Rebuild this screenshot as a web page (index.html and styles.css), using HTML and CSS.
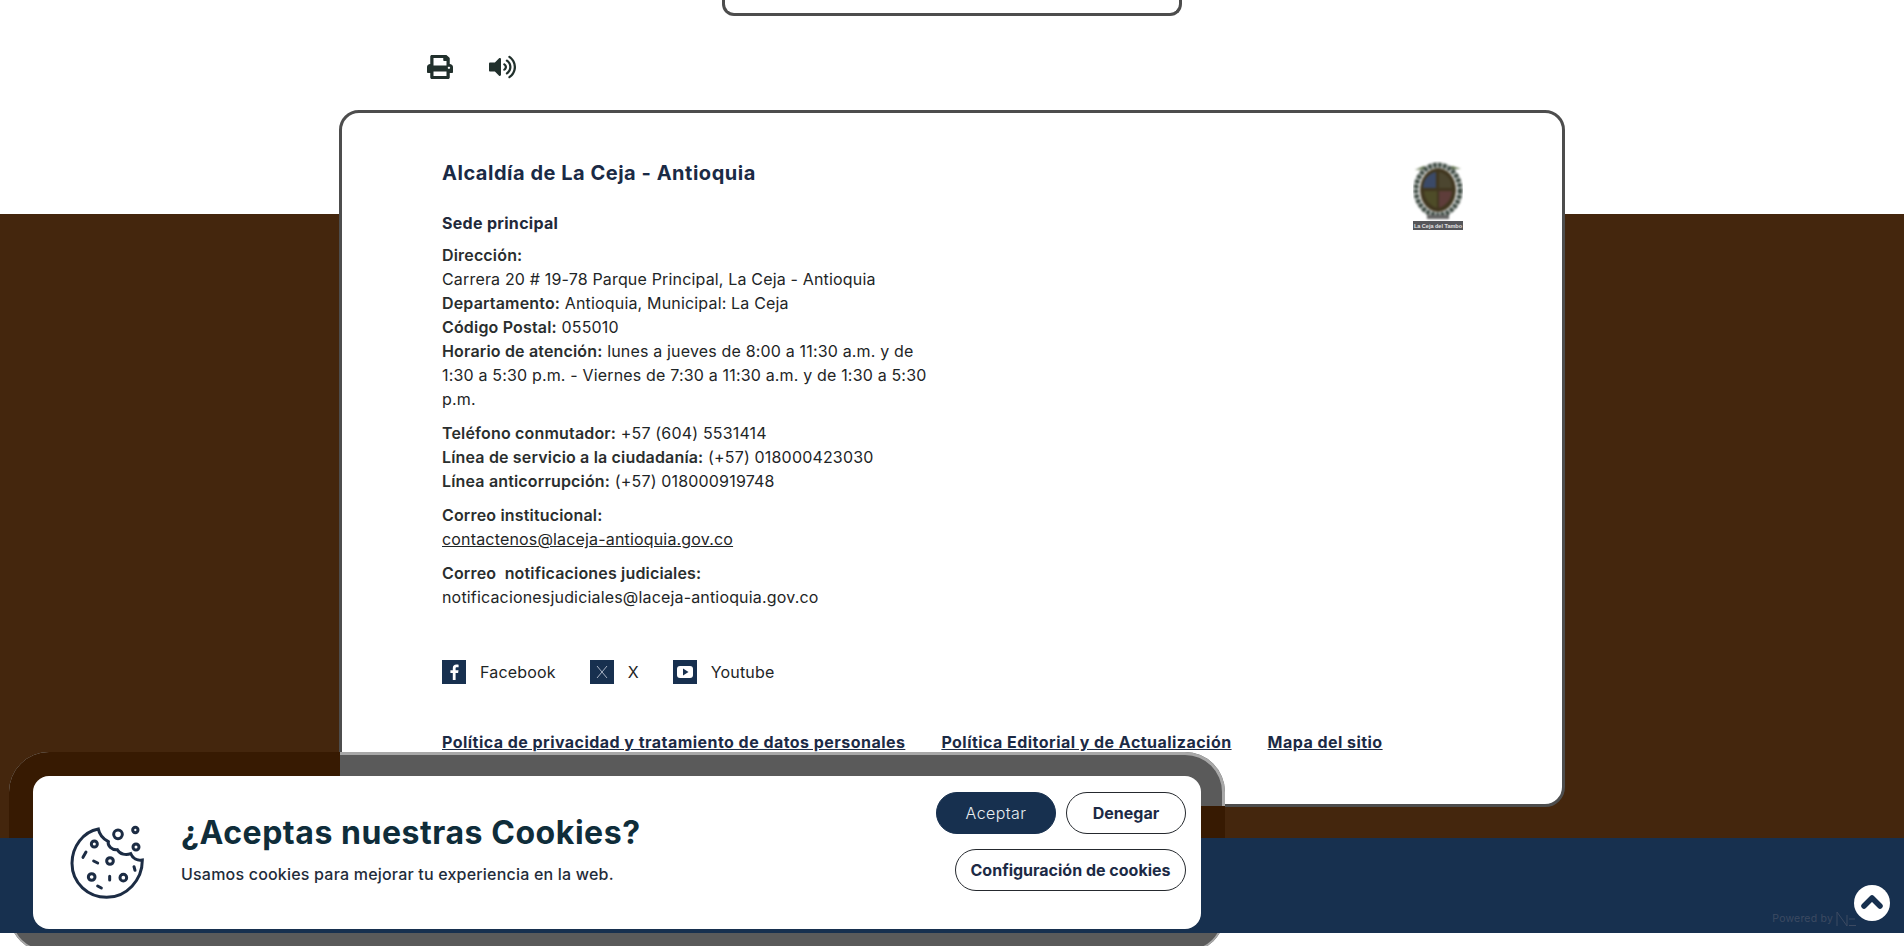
FILE: index.html
```html
<!DOCTYPE html>
<html lang="es">
<head>
<meta charset="utf-8">
<title>Alcaldía de La Ceja - Antioquia</title>
<link rel="stylesheet" href="styles.css">
</head>
<body>
<header class="top">
  <div class="stub"></div>
  <div class="tools">
    <svg class="ico-print" viewBox="0 0 512 512" preserveAspectRatio="none"><path d="M448 192V77.25c0-8.49-3.37-16.62-9.37-22.63L393.37 9.37c-6-6-14.14-9.37-22.63-9.37H96C78.33 0 64 14.33 64 32v160c-35.35 0-64 28.65-64 64v112c0 8.84 7.16 16 16 16h48v96c0 17.67 14.33 32 32 32h320c17.67 0 32-14.33 32-32v-96h48c8.84 0 16-7.16 16-16V256c0-35.35-28.65-64-64-64zm-64 256H128v-96h256v96zm0-224H128V64h192v48c0 8.84 7.16 16 16 16h48v96zm48 72c-13.25 0-24-10.75-24-24 0-13.26 10.75-24 24-24s24 10.74 24 24c0 13.25-10.75 24-24 24z"/></svg>
    <svg class="ico-sound" viewBox="0 0 576 512" preserveAspectRatio="none"><path d="M215.03 71.05L126.06 160H24c-13.26 0-24 10.74-24 24v144c0 13.25 10.74 24 24 24h102.06l88.97 88.95c15.03 15.03 40.97 4.47 40.97-16.97V88.02c0-21.46-25.96-31.98-40.97-16.97zm233.32-51.08c-11.17-7.33-26.18-4.24-33.51 6.95-7.34 11.17-4.22 26.18 6.95 33.51 66.27 43.49 105.82 116.6 105.82 195.58 0 78.98-39.55 152.09-105.82 195.58-11.17 7.32-14.29 22.34-6.95 33.5 7.04 10.71 21.93 14.56 33.51 6.95C528.27 439.58 576 351.33 576 256S528.27 72.43 448.35 19.97zM480 256c0-63.53-32.06-121.94-85.77-156.24-11.19-7.14-26.03-3.82-33.12 7.46s-3.78 26.21 7.41 33.36C408.27 165.97 432 209.11 432 256s-23.73 90.03-63.48 115.42c-11.19 7.14-14.5 22.07-7.41 33.36 6.51 10.36 21.12 15.14 33.12 7.46C447.94 377.94 480 319.54 480 256zm-141.77-76.87c-11.58-6.33-26.19-2.16-32.61 9.45-6.39 11.61-2.16 26.2 9.45 32.61C327.98 228.28 336 241.63 336 256c0 14.38-8.02 27.72-20.92 34.81-11.61 6.41-15.84 21-9.45 32.61 6.44 11.66 21.05 15.8 32.61 9.45 28.23-15.55 45.77-45 45.77-76.88s-17.54-61.32-45.78-76.86z"/></svg>
  </div>
</header>

<main class="band">
  <section class="card">
    <div class="card-head">
      <div class="info">
        <h1 class="org">Alcaldía de La Ceja - Antioquia</h1>
        <h2 class="sede">Sede principal</h2>
        <p class="para"><b>Dirección:</b><br>Carrera 20 # 19-78 Parque Principal, La Ceja - Antioquia<br><b>Departamento:</b> Antioquia, Municipal: La Ceja<br><b>Código Postal:</b> 055010<br><b>Horario de atención:</b> lunes a jueves de 8:00 a 11:30 a.m. y de 1:30 a 5:30 p.m. - Viernes de 7:30 a 11:30 a.m. y de 1:30 a 5:30 p.m.</p>
        <p class="para"><b>Teléfono conmutador:</b> +57 (604) 5531414<br><b>Línea de servicio a la ciudadanía:</b> (+57) 018000423030<br><b>Línea anticorrupción:</b> (+57) 018000919748</p>
        <p class="para"><b>Correo institucional:</b><br><a class="mail" href="#">contactenos@laceja-antioquia.gov.co</a></p>
        <p class="para"><b>Correo &nbsp;notificaciones judiciales:</b><br>notificacionesjudiciales@laceja-antioquia.gov.co</p>
      </div>
      <svg class="crest" viewBox="0 0 50 71">
        <g class="crest-soft">
          <path d="M2 9l9-4 3 3zM48 8l-9-3-3 3z" fill="#55683f"/>
          <ellipse cx="25" cy="29" rx="22" ry="25" fill="none" stroke="#3d4a42" stroke-width="5" stroke-dasharray="4 1"/>
          <ellipse cx="25" cy="29" rx="18" ry="22" fill="#40361f"/>
          <path d="M10 27c0-9 6-15 13-16v16z" fill="#3b4a68"/>
          <path d="M26 11c7 1 13 7 13 16H26z" fill="#4c4630"/>
          <path d="M11 30h13v17c-7-2-13-9-13-17z" fill="#4e4c28"/>
          <path d="M26 30h13c0 8-6 15-13 17z" fill="#5e3d3a"/>
          <rect x="14" y="54" width="22" height="4" fill="#666"/>
        </g>
        <rect x="0" y="60" width="50" height="9" fill="#55565a"/>
        <text class="crest-text" x="25" y="67" text-anchor="middle">La Ceja del Tambo</text>
      </svg>
    </div>

    <nav class="social">
      <a class="soc" href="#"><svg class="soc-ico" viewBox="0 0 24 24"><rect width="24" height="24" fill="#17304f"/><path d="M13.6 20v-7h2.5l.4-2.8h-2.9V8.500c0-.8.3-1.300 1.400-1.300h1.600V4.700c-.4 0-1.200-.1-2.200-.1-2.200 0-3.600 1.300-3.600 3.700v1.900H8.400V13h2.400v7z" fill="#fff"/></svg><span>Facebook</span></a>
      <a class="soc" href="#"><svg class="soc-ico" viewBox="0 0 24 24"><rect width="24" height="24" fill="#17304f"/><path d="M7 6l10 12M17 6L7 18" stroke="#a9b3c4" stroke-width="1" fill="none"/></svg><span>X</span></a>
      <a class="soc" href="#"><svg class="soc-ico" viewBox="0 0 24 24"><rect width="24" height="24" fill="#17304f"/><rect x="4" y="6" width="16" height="12" rx="3" fill="#fff"/><path d="M10 8.500v7l5.500-3.500z" fill="#17304f"/></svg><span>Youtube</span></a>
    </nav>

    <nav class="legal">
      <a class="legal-link" href="#">Política de privacidad y tratamiento de datos personales</a>
      <a class="legal-link" href="#">Política Editorial y de Actualización</a>
      <a class="legal-link" href="#">Mapa del sitio</a>
    </nav>
  </section>
</main>

<footer class="foot">
  <span class="powered">Powered by</span>
  <svg class="nx" viewBox="0 0 20 16"><path d="M1 15V1l10 14V4M13 8h6M13 14.500h7" stroke="#3c4a62" stroke-width="1" fill="none"/></svg>
</footer>
<div class="foot-gap"></div>

<a class="up" href="#" aria-label="Subir"><svg viewBox="0 0 36 36"><path d="M10 21l8-8 8 8" stroke="#17304f" stroke-width="5.500" stroke-linecap="round" stroke-linejoin="round" fill="none"/></svg></a>

<aside class="cookie">
  <div class="shade">
    <div class="shade-top">
      <div class="shade-left"></div>
      <div class="shade-under"></div>
    </div>
    <div class="shade-gap"></div>
    <div class="shade-bottom"></div>
  </div>
  <div class="cookie-box">
    <svg class="cookie-ico" viewBox="0 0 285 285">
      <g fill="none" stroke="#1c2c44" stroke-width="9" stroke-linecap="round">
        <path d="M115 42C70 50 36 95 36 145c0 60 49 102 104 102 60 0 107-52 107-112-15 3-29-5-35-19-14 6-32 2-40-12-17 2-30-12-27-24-15-8-27-22-30-38z"/>
        <circle cx="174" cy="58" r="13"/><circle cx="226" cy="45" r="8"/><circle cx="228" cy="96" r="9"/>
        <circle cx="103" cy="87" r="9"/><circle cx="150" cy="138" r="10"/><circle cx="95" cy="186" r="10"/><circle cx="190" cy="188" r="10"/>
        <path d="M69 127l9-16M101 138l12 6M149 184v11M113 213l11 6M222 155l3 11"/>
      </g>
    </svg>
    <div class="cookie-text">
      <h2 class="cookie-title">¿Aceptas nuestras Cookies?</h2>
      <p class="cookie-sub">Usamos cookies para mejorar tu experiencia en la web.</p>
    </div>
    <div class="cookie-btns">
      <button class="btn btn-solid">Aceptar</button>
      <button class="btn">Denegar</button>
      <button class="btn btn-wide">Configuración de cookies</button>
    </div>
  </div>
</aside>
</body>
</html>
```
FILE: styles.css
```css
* { box-sizing: border-box; }
html, body { margin: 0; height: 100%; }
body {
  overflow: hidden;
  background: #fff;
  color: #1e2526;
  font-family: Inter, "Liberation Sans", sans-serif;
  font-size: 16px;
  letter-spacing: .17px;
  line-height: 24px;
}
a { color: inherit; }

.top { height: 214px; }
.stub {
  width: 460px;
  height: 16px;
  margin-left: 722px;
  border: 3px solid #4d4d4d;
  border-top: 0;
  border-radius: 0 0 12px 12px;
}
.tools {
  display: flex;
  align-items: center;
  gap: 36px;
  padding: 39px 0 0 427px;
}
.ico-print { width: 26px; height: 24px; fill: #21302c; }
.ico-sound { width: 27px; height: 24px; fill: #21302c; }

.band {
  height: 624px;
  background: #44260d;
}
.card {
  position: relative;
  top: -104px;
  width: 1226px;
  height: 697px;
  margin-left: 339px;
  padding: 46px 99px 0 100px;
  background: #fff;
  border: 3px solid #4d4d4d;
  border-radius: 20px;
}
.card-head { display: flex; justify-content: space-between; align-items: flex-start; }
.info { width: 490px; }
.org {
  margin: 0 0 24px;
  font-size: 20px;
  line-height: 28px;
  font-weight: 700;
  letter-spacing: .52px;
  color: #1a2a45;
  white-space: nowrap;
}
.sede {
  margin: 0 0 8px;
  font-size: 16px;
  line-height: 24px;
  font-weight: 700;
  letter-spacing: .3px;
  color: #22293a;
}
.para { margin: 0 0 10px; }
.para b { font-weight: 600; color: #2a2e2e; }
.mail { text-decoration: underline; }

.crest { width: 50px; height: 71px; margin-top: 2px; }
.crest-soft { filter: blur(.8px); }
.crest-text { font-size: 5.500px; font-weight: 700; letter-spacing: 0; fill: #e0e0e0; font-family: "Liberation Sans", sans-serif; }

.social { display: flex; gap: 34px; margin-top: 41px; }
.soc { display: flex; align-items: center; gap: 14px; text-decoration: none; }
.soc-ico { width: 24px; height: 24px; display: block; }

.legal { display: flex; gap: 36px; margin-top: 46px; }
.legal-link {
  font-size: 16px;
  font-weight: 700;
  letter-spacing: .46px;
  color: #1c2a45;
  white-space: nowrap;
}

.foot {
  height: 95px;
  background: #17304f;
  display: flex;
  justify-content: flex-end;
  align-items: flex-end;
  gap: 3px;
  padding: 0 48px 6px 0;
}
.powered { font-size: 10.500px; line-height: 16px; letter-spacing: .2px; color: #3c4a62; }
.nx { width: 20px; height: 16px; }
.foot-gap { height: 13px; }

.up {
  position: fixed;
  left: 1854px;
  top: 885px;
  width: 36px;
  height: 36px;
  border-radius: 50%;
  background: #fff;
  z-index: 5;
}
.up svg { display: block; }

.cookie { position: fixed; left: 33px; top: 776px; width: 1168px; height: 153px; z-index: 10; }
.shade {
  position: absolute;
  inset: -24px;
  display: flex;
  flex-direction: column;
}
.shade-top {
  height: 86px;
  flex: none;
  border-radius: 40px 40px 0 0;
  overflow: hidden;
  background: #5a5a5a;
  box-shadow: inset 0 0 0 3px #a8a8a8;
}
.shade-left { width: 331px; height: 54px; background: #371a02; }
.shade-under { height: 32px; background: #371a02; }
.shade-gap { height: 75px; flex: none; }
.shade-bottom {
  height: 40px;
  flex: none;
  border-radius: 0 0 40px 40px;
  background: #5a5a5a;
  box-shadow: inset 0 0 0 3px #a8a8a8;
  clip-path: inset(20px 0 0 0);
}

.cookie-box {
  position: relative;
  display: flex;
  align-items: flex-start;
  height: 100%;
  padding: 16px 15px 0 27px;
  background: #fff;
  border-radius: 16px;
}
.cookie-ico { width: 95px; height: 95px; margin-top: 23px; flex: none; }
.cookie-text { margin: 19px 0 0 26px; }
.cookie-title {
  margin: 0;
  font-size: 32px;
  line-height: 44px;
  font-weight: 700;
  letter-spacing: .55px;
  color: #0f2d3a;
  white-space: nowrap;
}
.cookie-sub { margin: 7px 0 0; font-size: 16px; line-height: 24px; font-weight: 500; letter-spacing: .2px; color: #1f2c3a; }
.cookie-btns {
  margin-left: auto;
  width: 260px;
  display: flex;
  flex-wrap: wrap;
  justify-content: flex-end;
  gap: 15px 10px;
}
.btn {
  width: 120px;
  height: 42px;
  padding: 0;
  border: 1.5px solid #25292e;
  border-radius: 21px;
  background: #fff;
  color: #1c2a45;
  font-family: Inter, "Liberation Sans", sans-serif;
  font-size: 16px;
  font-weight: 700;
}
.btn-solid { background: #17304f; border-color: #17304f; color: #e8edf2; font-weight: 300; letter-spacing: .4px; }
.btn-wide { width: 231px; }
```
